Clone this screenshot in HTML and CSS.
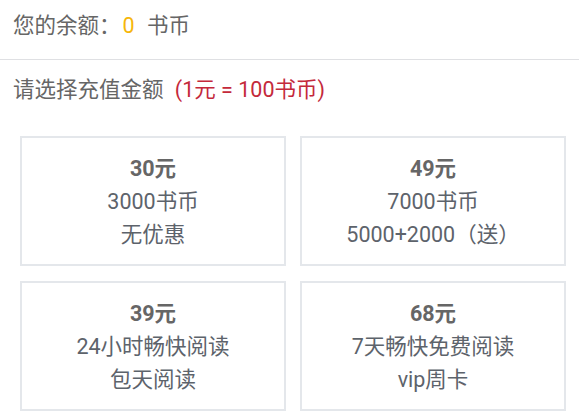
FILE: index.html
```html
<!DOCTYPE html>
<html lang="zh-CN">
<head>
    <meta charset="UTF-8">
    <meta name="viewport" content="width=device-width, initial-scale=1.0">
    <title>充值</title>
    <link rel="stylesheet" href="styles.css">
</head>
<body>
    <div class="balance">您的余额：<span class="coins">0</span> 书币</div>
    <div class="tip">请选择充值金额 <span class="rate">(1元 = 100书币)</span></div>
    <div class="plans">
        <div class="plan">
            <div class="price">30元</div>
            <div>3000书币</div>
            <div>无优惠</div>
        </div>
        <div class="plan">
            <div class="price">49元</div>
            <div>7000书币</div>
            <div>5000+2000（送）</div>
        </div>
        <div class="plan">
            <div class="price">39元</div>
            <div>24小时畅快阅读</div>
            <div>包天阅读</div>
        </div>
        <div class="plan">
            <div class="price">68元</div>
            <div>7天畅快免费阅读</div>
            <div>vip周卡</div>
        </div>
    </div>
</body>
</html>
```

FILE: styles.css
```css
body {
    margin: 0;
    padding: 0;
    background-color: #ffffff;
    font-family: Roboto, "Noto Sans CJK SC", sans-serif;
    font-size: 21.5px;
    color: #666666;
}
.balance {
    padding: 12px 13px 19px;
    line-height: 28px;
    border-bottom: 1px solid #dfe0e3;
}
.balance .coins {
    color: #f6b60a;
    margin: 0 7px 0 2px;
}
.tip {
    padding: 16px 13px 0;
    line-height: 28px;
}
.tip .rate {
    color: #c4293b;
    margin-left: 6px;
}
.plans {
    display: grid;
    grid-template-columns: 1fr 1fr;
    column-gap: 14px;
    row-gap: 15px;
    padding: 32px 13px 0 20px;
}
.plan {
    height: 130px;
    box-sizing: border-box;
    border: 2px solid #e4e7eb;
    display: flex;
    flex-direction: column;
    justify-content: center;
    align-items: center;
    line-height: 33px;
    color: #5d636b;
}
.plan .price {
    font-weight: bold;
    color: #666666;
}
```
